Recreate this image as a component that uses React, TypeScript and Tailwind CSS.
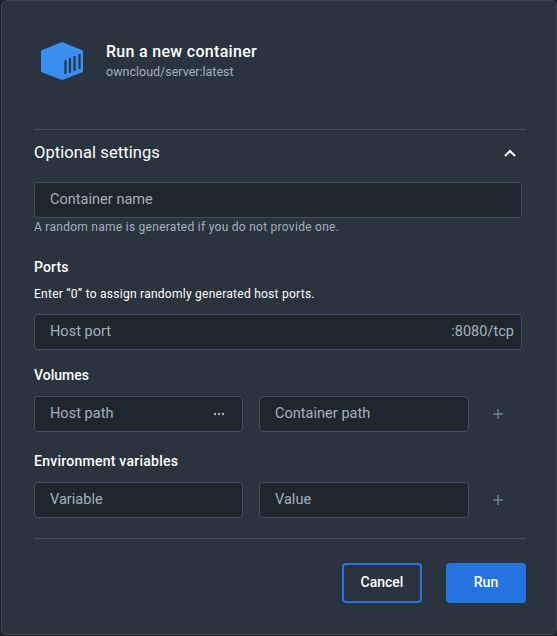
export default function App() {
  const Field = ({ label, className, children }: { label: string; className: string; children?: React.ReactNode }) => (
    <div className={`flex h-9 items-center justify-between rounded border border-[#3f5064] bg-[#1e272e] pl-[15px] pr-[7px] text-[14.5px] tracking-[0.03px] text-[#a3b1bf] ${className}`}>
      <span>{label}</span>
      {children}
    </div>
  );
  const Plus = () => (
    <svg width="10" height="10" viewBox="0 0 10 10" className="ml-[24px] shrink-0" fill="none" stroke="#71849a" strokeWidth="1.4">
      <path d="M5 0v10M0 5h10" />
    </svg>
  );
  return (
    <div className="h-[636px] w-[557px] bg-[#1c2329] pl-px font-['Roboto',sans-serif]">
      <div className="h-[635px] w-[556px] rounded-md border border-[#3a454f] bg-[#29343e] pl-[32px] pr-[30px] pt-[41px]">
        <div className="flex h-[40px] items-center">
          <svg width="43" height="38" viewBox="0 0 43 38" className="ml-[7px] shrink-0 self-start">
            <path d="M21 0 42 8.500V30L21 38 0 30V8.500Z" fill="#3a8ff0" />
            <path d="M24.500 18v14M29 16v15M33.500 14v15M38.500 12v15" stroke="#24384c" strokeWidth="2.200" />
          </svg>
          <div className="ml-[22px]">
            <div className="text-[16px] font-medium leading-[20px] tracking-[0.3px] text-white">Run a new container</div>
            <div className="text-[12.5px] leading-[20px] text-[#a3b1bf]">owncloud/server:latest</div>
          </div>
        </div>
        <div className="mt-[47px] border-t border-[#424e59]" />
        <div className="flex h-[45px] items-center justify-between pr-[10px]">
          <span className="pt-[2px] text-[16.5px] tracking-[0.08px] text-white">Optional settings</span>
          <svg width="12" height="8" viewBox="0 0 12 8" fill="none" stroke="#ffffff" strokeWidth="2">
            <path d="M1 7l5-5 5 5" />
          </svg>
        </div>
        <div className="mt-[7px] w-[488px]">
          <Field label="Container name" className="w-full" />
        </div>
        <div className="mt-px text-[12px] leading-[16px] tracking-[0.27px] text-[#a3b1bf]">A random name is generated if you do not provide one.</div>
        <div className="mt-[22px] text-[14px] font-medium leading-[20px] tracking-[0.1px] text-white">Ports</div>
        <div className="mt-[7px] text-[12px] leading-[20px] tracking-[0.26px] text-white">Enter “0” to assign randomly generated host ports.</div>
        <div className="mt-[10px] w-[488px]">
          <Field label="Host port" className="w-full">
            <span>:8080/tcp</span>
          </Field>
        </div>
        <div className="mt-[15px] text-[14px] font-medium leading-[20px] text-white">Volumes</div>
        <div className="mt-[11px] flex items-center gap-4">
          <Field label="Host path" className="w-[209px]">
            <svg width="12" height="4" viewBox="0 0 12 4" className="mr-[10px]" fill="#a3b1bf">
              <circle cx="2" cy="2" r="1.200" /><circle cx="6" cy="2" r="1.200" /><circle cx="10" cy="2" r="1.200" />
            </svg>
          </Field>
          <div className="flex items-center">
            <Field label="Container path" className="w-[210px]" />
            <Plus />
          </div>
        </div>
        <div className="mt-[19px] text-[14px] font-medium leading-[20px] tracking-[0.25px] text-white">Environment variables</div>
        <div className="mt-[11px] flex items-center gap-4">
          <Field label="Variable" className="w-[209px]" />
          <div className="flex items-center">
            <Field label="Value" className="w-[210px]" />
            <Plus />
          </div>
        </div>
        <div className="mt-[20px] border-t border-[#424e59]" />
        <div className="mt-[24px] flex justify-end gap-6">
          <button className="h-10 w-20 rounded border-2 border-[#2a74e2] pb-[2px] text-[14px] font-medium text-white">Cancel</button>
          <button className="h-10 w-20 rounded bg-[#2673e2] pb-[2px] text-[14px] font-medium text-white">Run</button>
        </div>
      </div>
    </div>
  );
}
